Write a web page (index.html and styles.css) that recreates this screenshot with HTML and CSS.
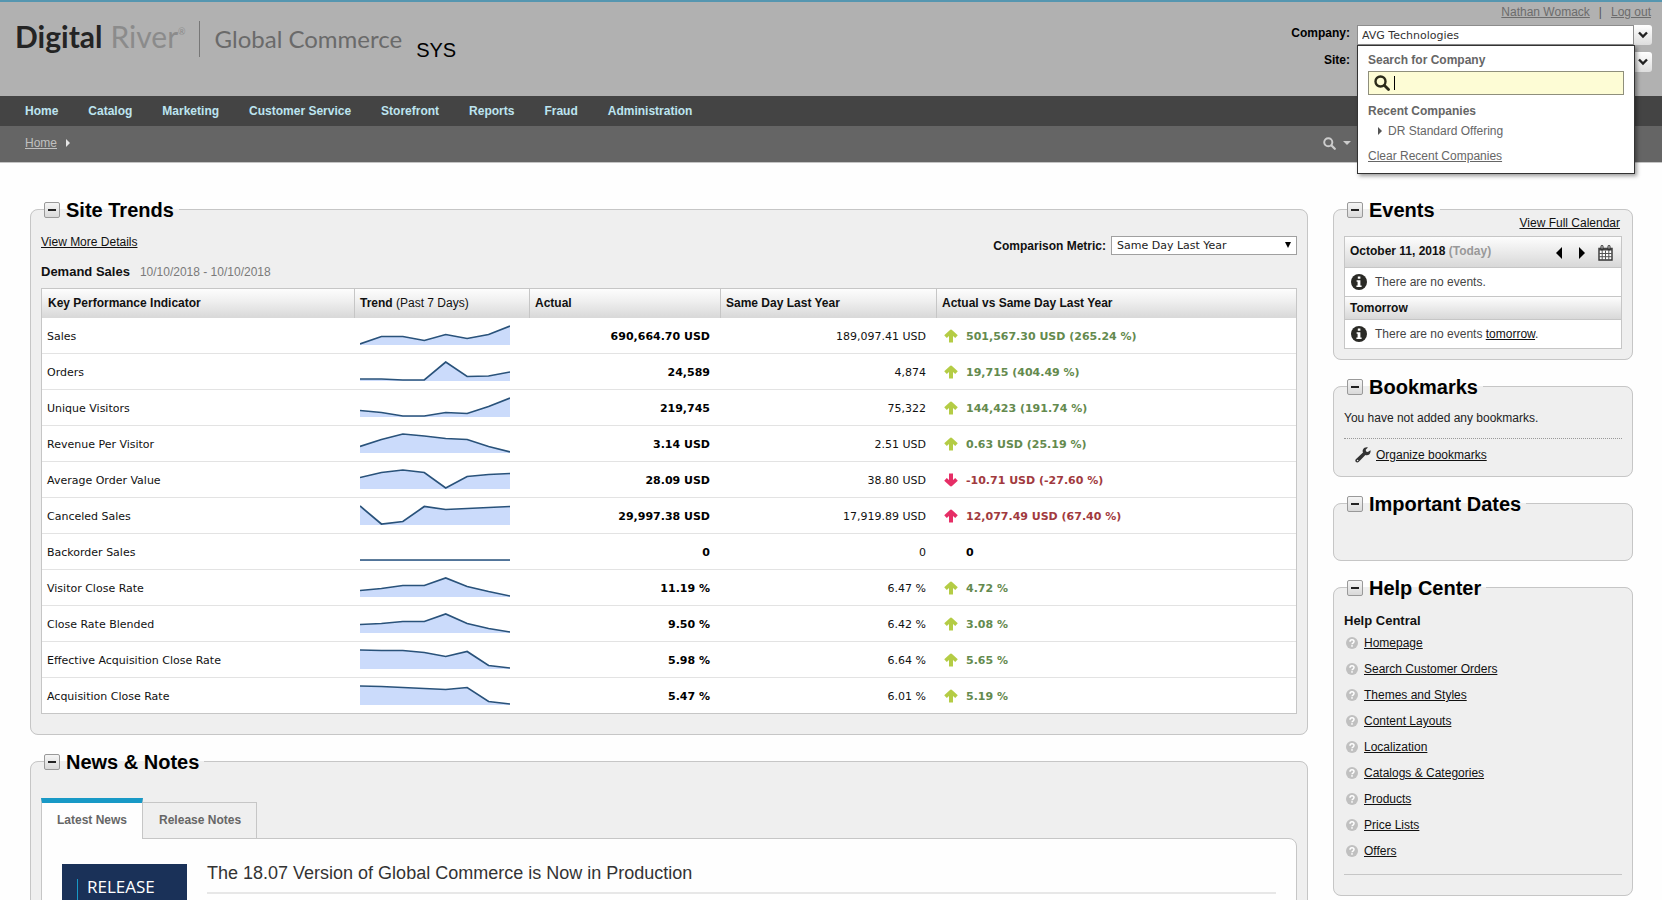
FILE: index.html
```
<!DOCTYPE html>
<html lang="en">
<head>
    <meta charset="UTF-8">
    <meta name="viewport" content="width=device-width, initial-scale=1.0">
    <title>Global Commerce - Home</title>
    <link rel="stylesheet" href="styles.css">
</head>
<body>
    <svg width="0" height="0" class="sprite" aria-hidden="true">
        <symbol id="search" viewBox="0 0 16 16">
            <circle cx="6.5" cy="6.5" r="5" fill="none" stroke="currentColor" stroke-width="2.4"/>
            <path d="M10.500 10.500l4 4" stroke="currentColor" stroke-width="2.800" stroke-linecap="round"/>
        </symbol>
        <symbol id="chevron" viewBox="0 0 10 8">
            <path d="M1 1.5l4 4 4-4" fill="none" stroke="#222" stroke-width="2.4"/>
        </symbol>
        <symbol id="arrow" viewBox="0 0 14 14">
            <path d="M1.500 7.600L7 2.600l5.500 5" fill="none" stroke="currentColor" stroke-width="3.800" stroke-linejoin="round"/>
            <path d="M7 3v10.500" stroke="currentColor" stroke-width="4"/>
        </symbol>
        <symbol id="info" viewBox="0 0 16 16">
            <circle cx="8" cy="8" r="8" fill="#2a2a26"/>
            <path d="M6.8 2.6h2.6v2.2H6.800zM5.600 6.200h3.800v5.200h1.200v1.600H5.400v-1.600h1.200V7.800H5.600z" fill="#fff"/>
        </symbol>
        <symbol id="help" viewBox="0 0 12 12">
            <circle cx="6" cy="6" r="6" fill="#c0c0c0"/>
            <path d="M4 4.700c0-2.600 4-2.600 4-.2C8 6 6 6 6 7.300" fill="none" stroke="#fff" stroke-width="1.500"/>
            <rect x="5.200" y="8.200" width="1.600" height="1.500" fill="#fff"/>
        </symbol>
    </svg>

    <header class="header">
        <div class="logo">
            <span class="logo-digital">Digital</span>
            <span class="logo-river">River<sup>®</sup></span>
            <span class="logo-product">Global Commerce</span>
            <span class="logo-env">SYS</span>
        </div>
        <div class="account">
            <div class="account-links">
                <a href="#">Nathan Womack</a><span>|</span><a href="#">Log out</a>
            </div>
            <div class="picker">
                <label for="company">Company:</label>
                <div class="combo">
                    <input type="text" id="company" value="AVG Technologies">
                    <button type="button" aria-label="Show companies"><svg width="10" height="8"><use href="#chevron"/></svg></button>
                    <div class="company-menu">
                        <label for="companySearch">Search for Company</label>
                        <div class="company-search">
                            <svg width="16" height="16"><use href="#search"/></svg>
                            <i class="cursor"></i>
                            <input type="text" id="companySearch">
                        </div>
                        <h4>Recent Companies</h4>
                        <p class="recent"><i></i>DR Standard Offering</p>
                        <a href="#">Clear Recent Companies</a>
                    </div>
                </div>
            </div>
            <div class="picker">
                <label for="site">Site:</label>
                <div class="combo">
                    <input type="text" id="site">
                    <button type="button" aria-label="Show sites"><svg width="10" height="8"><use href="#chevron"/></svg></button>
                </div>
            </div>
        </div>
    </header>

    <nav class="nav">
        <a href="#">Home</a>
        <a href="#">Catalog</a>
        <a href="#">Marketing</a>
        <a href="#">Customer Service</a>
        <a href="#">Storefront</a>
        <a href="#">Reports</a>
        <a href="#">Fraud</a>
        <a href="#">Administration</a>
    </nav>

    <div class="breadcrumb">
        <a href="#">Home</a><i class="crumb-arrow"></i>
        <button type="button" class="quick-search" aria-label="Search"><svg width="13" height="13"><use href="#search"/></svg><i></i></button>
    </div>

    <main class="content">
        <div class="main-column">
            <fieldset class="panel trends">
                <legend><button type="button" class="toggle" aria-label="Collapse"></button>Site Trends</legend>
                <div class="trends-top">
                    <a href="#">View More Details</a>
                    <div class="metric">
                        <label for="metric">Comparison Metric:</label>
                        <div class="select">
                            <select id="metric"><option>Same Day Last Year</option></select>
                        </div>
                    </div>
                </div>
                <p class="range"><b>Demand Sales</b>10/10/2018 - 10/10/2018</p>
                <table class="kpi">
                    <colgroup><col class="col-name"><col class="col-trend"><col class="col-actual"><col class="col-last"><col></colgroup>
                    <thead>
                        <tr><th>Key Performance Indicator</th><th>Trend <span>(Past 7 Days)</span></th><th>Actual</th><th>Same Day Last Year</th><th>Actual vs Same Day Last Year</th></tr>
                    </thead>
                    <tbody>
                        <tr><td>Sales</td><td data-trend="19,11.5,11.5,15.5,9.5,13.5,9.5,1"></td><td>690,664.70 USD</td><td>189,097.41 USD</td><td class="good"><svg><use href="#arrow"/></svg>501,567.30 USD (265.24 %)</td></tr>
                        <tr><td>Orders</td><td data-trend="18,18,19,19,1,15.5,15,11"></td><td>24,589</td><td>4,874</td><td class="good"><svg><use href="#arrow"/></svg>19,715 (404.49 %)</td></tr>
                        <tr><td>Unique Visitors</td><td data-trend="13.5,15.5,19,19,15.5,16.5,9.5,1"></td><td>219,745</td><td>75,322</td><td class="good"><svg><use href="#arrow"/></svg>144,423 (191.74 %)</td></tr>
                        <tr><td>Revenue Per Visitor</td><td data-trend="13.5,6.5,1,3,5.5,6.5,13.5,19"></td><td>3.14 USD</td><td>2.51 USD</td><td class="good"><svg><use href="#arrow"/></svg>0.63 USD (25.19 %)</td></tr>
                        <tr><td>Average Order Value</td><td data-trend="8.5,3.5,1,3.5,19,7.5,5.5,4.5"></td><td>28.09 USD</td><td>38.80 USD</td><td class="bad"><svg class="down"><use href="#arrow"/></svg>-10.71 USD (-27.60 %)</td></tr>
                        <tr><td>Canceled Sales</td><td data-trend="1,19,16.5,1.5,4.5,3.5,2.5,1.5"></td><td>29,997.38 USD</td><td>17,919.89 USD</td><td class="bad"><svg><use href="#arrow"/></svg>12,077.49 USD (67.40 %)</td></tr>
                        <tr><td>Backorder Sales</td><td data-trend="19,19,19,19,19,19,19,19"></td><td>0</td><td>0</td><td><svg></svg>0</td></tr>
                        <tr><td>Visitor Close Rate</td><td data-trend="13.5,11.5,8.5,8.5,1,9.5,14.5,19"></td><td>11.19 %</td><td>6.47 %</td><td class="good"><svg><use href="#arrow"/></svg>4.72 %</td></tr>
                        <tr><td>Close Rate Blended</td><td data-trend="11.5,10.5,8.5,8.5,1,10.5,15.5,19"></td><td>9.50 %</td><td>6.42 %</td><td class="good"><svg><use href="#arrow"/></svg>3.08 %</td></tr>
                        <tr><td>Effective Acquisition Close Rate</td><td data-trend="1,1.5,1.5,3.5,7.5,2.5,16.5,19"></td><td>5.98 %</td><td>6.64 %</td><td class="good"><svg><use href="#arrow"/></svg>5.65 %</td></tr>
                        <tr><td>Acquisition Close Rate</td><td data-trend="1,1.5,2.5,3.5,4.5,2.5,16.5,19"></td><td>5.47 %</td><td>6.01 %</td><td class="good"><svg><use href="#arrow"/></svg>5.19 %</td></tr>
                    </tbody>
                </table>
            </fieldset>

            <fieldset class="panel news">
                <legend><button type="button" class="toggle" aria-label="Collapse"></button>News &amp; Notes</legend>
                <div class="tabs">
                    <button type="button" class="tab active">Latest News</button>
                    <button type="button" class="tab">Release Notes</button>
                </div>
                <div class="news-body">
                    <div class="release"><span>RELEASE</span></div>
                    <h3>The 18.07 Version of Global Commerce is Now in Production</h3>
                </div>
            </fieldset>
        </div>

        <aside class="side-column">
            <fieldset class="panel events">
                <legend><button type="button" class="toggle" aria-label="Collapse"></button>Events</legend>
                <a href="#" class="full-calendar">View Full Calendar</a>
                <div class="agenda">
                    <div class="agenda-head today">
                        <b>October 11, 2018 <span>(Today)</span></b>
                        <button type="button" aria-label="Previous day"><svg width="6" height="12"><path d="M6 0v12L0 6z"/></svg></button>
                        <button type="button" aria-label="Next day"><svg width="6" height="12"><path d="M0 0v12l6-6z"/></svg></button>
                        <button type="button" aria-label="Calendar">
                            <svg width="15" height="16" viewBox="0 0 15 16">
                                <path d="M1 3.500h13V15H1z" fill="#fff" stroke="#333" stroke-width="1.400"/>
                                <path d="M1 3h13v2.500H1z" fill="#444"/>
                                <path d="M1 8.500h13M1 11.700h13M4.200 5.500V15M7.500 5.500V15M10.800 5.500V15" stroke="#555"/>
                                <path d="M4 1.500v2.500M11 1.500v2.500" stroke="#333" stroke-width="3" stroke-linecap="round"/>
                                <path d="M4 1v2.500M11 1v2.500" stroke="#ddd"/>
                            </svg>
                        </button>
                    </div>
                    <p><svg width="16" height="16"><use href="#info"/></svg>There are no events.</p>
                    <div class="agenda-head"><b>Tomorrow</b></div>
                    <p><svg width="16" height="16"><use href="#info"/></svg><span>There are no events <a href="#">tomorrow</a>.</span></p>
                </div>
            </fieldset>

            <fieldset class="panel bookmarks">
                <legend><button type="button" class="toggle" aria-label="Collapse"></button>Bookmarks</legend>
                <p>You have not added any bookmarks.</p>
                <div class="organize">
                    <svg width="16" height="16" viewBox="0 0 16 16"><path d="M15.500 3.200l-2.700 1.700-1.700-.4-.4-1.700L12.900.5C11 0 8.900.7 8 2.500c-.5 1-.5 2 0 3L.8 12.300c-1.600 1.800.9 4.300 2.800 2.800L10.400 8c3 1.100 5.800-1.600 5.100-4.800z" fill="#333"/><circle cx="2.600" cy="13.500" r=".8" fill="#eee"/></svg>
                    <a href="#">Organize bookmarks</a>
                </div>
            </fieldset>

            <fieldset class="panel dates">
                <legend><button type="button" class="toggle" aria-label="Collapse"></button>Important Dates</legend>
            </fieldset>

            <fieldset class="panel help">
                <legend><button type="button" class="toggle" aria-label="Collapse"></button>Help Center</legend>
                <h4>Help Central</h4>
                <ul>
                    <li><svg width="12" height="12"><use href="#help"/></svg><a href="#">Homepage</a></li>
                    <li><svg width="12" height="12"><use href="#help"/></svg><a href="#">Search Customer Orders</a></li>
                    <li><svg width="12" height="12"><use href="#help"/></svg><a href="#">Themes and Styles</a></li>
                    <li><svg width="12" height="12"><use href="#help"/></svg><a href="#">Content Layouts</a></li>
                    <li><svg width="12" height="12"><use href="#help"/></svg><a href="#">Localization</a></li>
                    <li><svg width="12" height="12"><use href="#help"/></svg><a href="#">Catalogs &amp; Categories</a></li>
                    <li><svg width="12" height="12"><use href="#help"/></svg><a href="#">Products</a></li>
                    <li><svg width="12" height="12"><use href="#help"/></svg><a href="#">Price Lists</a></li>
                    <li><svg width="12" height="12"><use href="#help"/></svg><a href="#">Offers</a></li>
                </ul>
            </fieldset>
        </aside>
    </main>

    <script>
        // Draw the 7 day sparklines
        document.querySelectorAll('[data-trend]').forEach(cell => {
            const values = cell.dataset.trend.split(',');
            const step = 150 / (values.length - 1);
            const points = values.map((v, i) => `${i * step},${v}`).join(' ');
            cell.innerHTML = `<svg class="spark" viewBox="0 0 150 20">
                <polygon points="0,20 ${points} 150,20"/>
                <polyline points="${points}"/>
            </svg>`;
        });
    </script>
</body>
</html>
```
FILE: styles.css
```
* {
    box-sizing: border-box;
}
body {
    margin: 0;
    height: 100vh;
    overflow: hidden;
    background-color: #fefefe;
    color: #111;
    font-family: "Liberation Sans", Arial, sans-serif;
    font-size: 12px;
    line-height: 16px;
}
p, h3, h4, ul {
    margin: 0;
    padding: 0;
}
a {
    color: #111;
}
button {
    padding: 0;
    border: none;
    background: none;
    font: inherit;
    cursor: pointer;
}
svg {
    display: block;
    flex: none;
}
.sprite {
    position: absolute;
}

/* Header */
.header {
    display: flex;
    justify-content: space-between;
    height: 96px;
    padding: 0 10px 0 15px;
    border-top: 2px solid #5596b0;
    background-color: #b1b1b1;
}
.logo {
    display: flex;
    align-items: baseline;
    height: 60px;
    padding-top: 16px;
    font-family: Lato, sans-serif;
    line-height: 36px;
}
.logo-digital {
    color: #242424;
    font-size: 30px;
    font-weight: bold;
}
.logo-river {
    margin-left: 8px;
    color: #8b8b8b;
    font-size: 30px;
}
.logo-river sup {
    font-size: 9px;
    line-height: 9px;
    vertical-align: 13px;
}
.logo-product {
    margin-left: 13px;
    padding-left: 15px;
    border-left: 1px solid #777;
    color: #6a6a6a;
    font-size: 24px;
}
.logo-env {
    align-self: flex-end;
    margin-left: 14px;
    color: #000;
    font-family: "Liberation Sans", Arial, sans-serif;
    font-size: 20px;
    line-height: 24px;
}
.account-links {
    display: flex;
    justify-content: flex-end;
    gap: 9px;
    height: 23px;
    padding: 2px 1px 0 0;
    color: #555;
}
.account-links a {
    color: #6c6c6c;
}
.picker {
    display: flex;
    justify-content: flex-end;
    gap: 7px;
    margin-bottom: 7px;
    font-weight: bold;
}
.picker > label {
    color: #000;
}
.combo {
    position: relative;
    display: flex;
    width: 295px;
    height: 20px;
}
.combo > input {
    flex: 1;
    min-width: 0;
    padding: 0 4px;
    border: 1px solid #8d8d8d;
    background-color: #fff;
    color: #333;
    font-family: "DejaVu Sans", Verdana, sans-serif;
    font-size: 11px;
}
.combo > button {
    display: flex;
    align-items: center;
    justify-content: center;
    width: 18px;
    border-radius: 0 3px 3px 0;
    background: linear-gradient(#fff, #ddd);
}
.company-menu {
    position: absolute;
    z-index: 1;
    top: 20px;
    left: 0;
    width: 278px;
    padding: 6px 10px 9px;
    border: 1px solid #333;
    background-color: #fff;
    box-shadow: 2px 2px 4px rgba(0, 0, 0, 0.4);
    color: #666;
    font-weight: normal;
}
.company-menu label, .company-menu h4 {
    display: block;
    font-weight: bold;
}
.company-search {
    display: flex;
    align-items: center;
    height: 24px;
    margin: 3px 0 8px;
    padding-left: 5px;
    border: 1px solid #8f8f7c;
    background-color: #fdfcd5;
    color: #2b2b1a;
}
.company-search input {
    flex: 1;
    min-width: 0;
    border: none;
    background: none;
    outline: none;
}
.cursor {
    width: 1px;
    height: 14px;
    margin-left: 4px;
    background-color: #000;
}
.recent {
    display: flex;
    align-items: center;
    margin: 4px 0 9px 10px;
}
.recent i {
    margin-right: 6px;
    border: 4px solid transparent;
    border-left-color: #555;
    border-right: none;
}
.company-menu a {
    color: #666;
}

/* Navigation */
.nav {
    display: flex;
    gap: 30px;
    height: 30px;
    padding: 0 25px;
    background-color: #444;
    line-height: 30px;
}
.nav a {
    color: #bde4f0;
    font-weight: bold;
    text-decoration: none;
}
.breadcrumb {
    display: flex;
    align-items: center;
    height: 37px;
    padding: 0 311px 2px 25px;
    border-bottom: 1px solid #c4c4c4;
    background-color: #656565;
}
.breadcrumb a {
    color: #c0c0c0;
}
.crumb-arrow {
    margin-left: 9px;
    border: 4px solid transparent;
    border-left-color: #e5e5e5;
    border-right: none;
}
.quick-search {
    display: flex;
    align-items: center;
    gap: 7px;
    margin-left: auto;
    color: #ccc;
}
.quick-search i {
    border: 4px solid transparent;
    border-top-color: #ccc;
    border-bottom: none;
}

/* Panels */
.content {
    display: flex;
    gap: 25px;
    padding: 35px 29px 0 30px;
}
.main-column, .side-column {
    display: flex;
    flex-direction: column;
    gap: 15px;
}
.main-column {
    flex: 1;
    min-width: 0;
}
.side-column {
    width: 300px;
}
.panel {
    min-width: 0;
    margin: 0;
    padding: 0 10px;
    border: 1px solid #c6c6c6;
    border-radius: 8px;
    background-color: #efefef;
}
.panel legend {
    display: flex;
    align-items: center;
    height: 23px;
    margin-left: 3px;
    padding: 2px 5px 0 0;
    color: #000;
    font-size: 20px;
    font-weight: bold;
    line-height: 21px;
}
.toggle {
    display: flex;
    align-items: center;
    justify-content: center;
    width: 16px;
    height: 16px;
    margin: 0 6px 2px 0;
    border: 1px solid #999;
    border-radius: 2px;
    background: linear-gradient(#f5f5f5, #d9d9d9);
}
.toggle::before {
    content: "";
    width: 8px;
    height: 2px;
    background-color: #222;
}

/* Site trends */
.trends {
    padding-bottom: 20px;
}
.trends-top {
    display: flex;
    justify-content: space-between;
    padding-top: 13px;
}
.metric {
    display: flex;
    align-items: center;
    gap: 5px;
    padding-top: 2px;
    font-weight: bold;
}
.select {
    position: relative;
}
.select::after {
    content: "";
    position: absolute;
    top: 6px;
    right: 6px;
    border: 3px solid transparent;
    border-top: 6px solid #000;
    border-bottom: none;
}
.select select {
    display: block;
    appearance: none;
    width: 186px;
    height: 19px;
    padding: 0 5px;
    border: 1px solid #a0a0a0;
    border-radius: 0;
    background-color: #fff;
    color: #222;
    font-family: "DejaVu Sans", Verdana, sans-serif;
    font-size: 11px;
}
.range {
    padding: 9px 0 8px;
    color: #7a7a7a;
}
.range b {
    margin-right: 10px;
    color: #111;
    font-size: 13px;
}
.kpi {
    width: 100%;
    table-layout: fixed;
    border: 1px solid #c6c6c6;
    border-bottom: none;
    border-spacing: 0;
    background-color: #fff;
}
.col-name {
    width: 312px;
}
.col-trend {
    width: 175px;
}
.col-actual {
    width: 191px;
}
.col-last {
    width: 216px;
}
.kpi th {
    height: 29px;
    padding: 0 5px 2px;
    border-left: 1px solid #c6c6c6;
    background: linear-gradient(#fdfdfd, #f0f0f0 40%, #d8d8d8);
    text-align: left;
}
.kpi th:first-child {
    padding-left: 6px;
    border-left: none;
}
.kpi th span {
    font-weight: normal;
}
.kpi td {
    height: 36px;
    padding: 2px 5px 0;
    border-bottom: 1px solid #e3e3e3;
    color: #111;
    font-family: "DejaVu Sans", Verdana, sans-serif;
    font-size: 11px;
}
.kpi tr:last-child td {
    border-bottom-color: #c6c6c6;
}
.kpi td:nth-child(2) {
    padding: 0 6px 2px;
}
.kpi td:nth-child(3), .kpi td:nth-child(4) {
    padding-right: 10px;
    text-align: right;
}
.kpi td:nth-child(3), .kpi td:nth-child(5) {
    color: #000;
    font-weight: bold;
}
.kpi td:nth-child(5) {
    padding-left: 8px;
}
.kpi td:nth-child(5) svg {
    display: inline-block;
    width: 14px;
    height: 14px;
    margin-right: 8px;
    color: #b4cc45;
    vertical-align: -3px;
}
.kpi td.good {
    color: #648a4e;
}
.kpi td.bad {
    color: #a13a3e;
}
.kpi td.bad svg {
    color: #e62e66;
}
.down {
    transform: rotate(180deg);
}
.spark {
    width: 150px;
    height: 20px;
}
.spark polygon {
    fill: #cbdbfb;
}
.spark polyline {
    fill: none;
    stroke: #29527a;
    stroke-width: 1.7;
}

/* News */
.tabs {
    display: flex;
    align-items: flex-end;
    padding-top: 25px;
}
.tab {
    height: 37px;
    margin-bottom: -1px;
    padding: 0 15px 2px 16px;
    border: 1px solid #c6c6c6;
    border-left: none;
    color: #666;
    font-weight: bold;
}
.tab.active {
    position: relative;
    z-index: 1;
    height: 41px;
    padding: 0 15px 3px;
    border-top: 5px solid #1899c6;
    border-bottom: none;
    border-left: 1px solid #c6c6c6;
    background-color: #fefefe;
}
.news-body {
    display: flex;
    gap: 20px;
    height: 180px;
    padding: 25px 20px;
    border: 1px solid #c6c6c6;
    border-radius: 0 8px 0 0;
    background-color: #fefefe;
}
.release {
    flex: none;
    width: 125px;
    height: 125px;
    padding: 15px;
    background-color: #1a3158;
    color: #fff;
}
.release span {
    display: block;
    height: 95px;
    padding-left: 9px;
    border-left: 1px solid #1899c6;
    font-family: "Open Sans", sans-serif;
    font-size: 17px;
    line-height: 16px;
}
.news-body h3 {
    flex: 1;
    height: 30px;
    border-bottom: 2px solid #e7e7e7;
    color: #333;
    font-size: 18px;
    font-weight: normal;
    line-height: 18px;
}

/* Sidebar */
.full-calendar {
    display: block;
    margin: -6px 2px 5px 0;
    text-align: right;
}
.events {
    padding-bottom: 10px;
}
.agenda {
    border: 1px solid #c6c6c6;
    background-color: #fff;
}
.agenda-head {
    display: flex;
    align-items: center;
    height: 22px;
    padding: 0 5px;
    background: linear-gradient(#fdfdfd, #d8d8d8);
}
.agenda-head.today {
    gap: 17px;
    height: 30px;
    padding: 1px 8px 0 5px;
}
.agenda-head b {
    flex: 1;
}
.today b {
    padding-bottom: 4px;
}
.agenda-head b span {
    color: #999;
}
.agenda-head button:last-child {
    margin-left: -4px;
}
.agenda p {
    display: flex;
    align-items: center;
    gap: 8px;
    height: 29px;
    padding-left: 6px;
    border-top: 1px solid #c6c6c6;
    color: #444;
}
.agenda p:not(:last-child) {
    height: 30px;
    border-bottom: 1px solid #c6c6c6;
}
.bookmarks {
    padding-bottom: 13px;
}
.bookmarks p {
    padding: 12px 0;
    border-bottom: 1px dotted #999;
    color: #222;
}
.organize {
    display: flex;
    align-items: center;
    gap: 5px;
    padding: 8px 0 0 11px;
}
.dates {
    padding-bottom: 45px;
}
.help {
    padding-bottom: 20px;
}
.help h4 {
    padding: 14px 0 1px;
    font-size: 13px;
}
.help ul {
    padding-bottom: 10px;
    border-bottom: 1px solid #c6c6c6;
    list-style: none;
}
.help li {
    display: flex;
    align-items: center;
    gap: 6px;
    height: 26px;
    padding-left: 2px;
}
```
